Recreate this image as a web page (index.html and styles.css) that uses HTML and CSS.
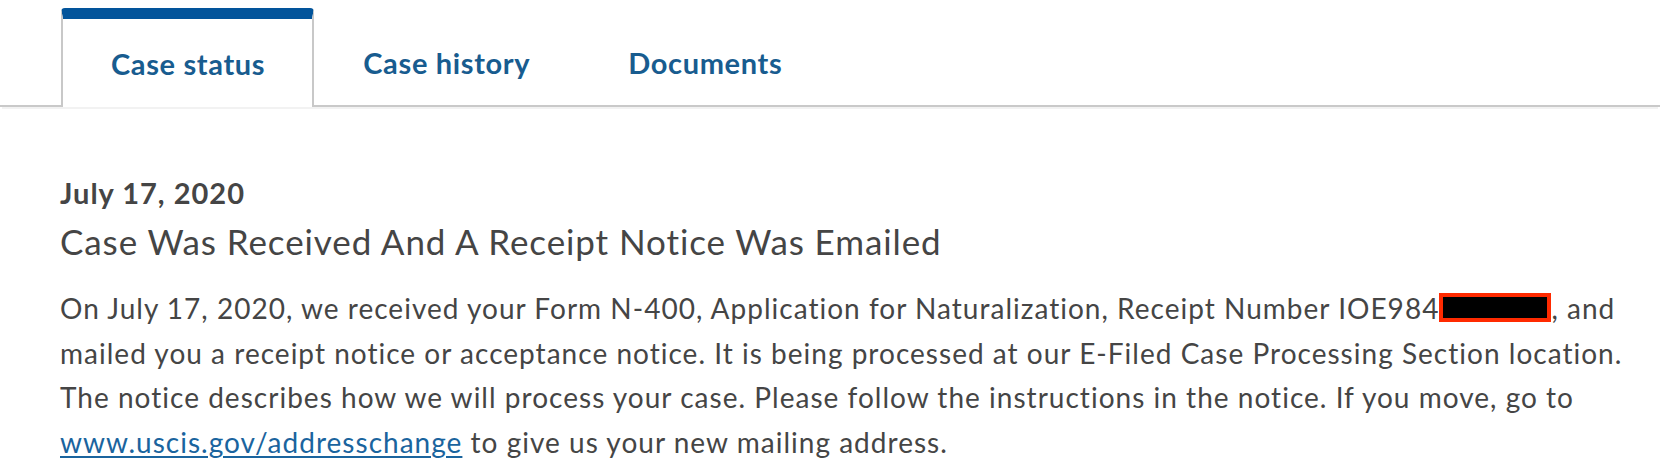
FILE: index.html
```html
<!DOCTYPE html>
<html lang="en">
<head>
<meta charset="utf-8">
<title>Case status</title>
<link rel="stylesheet" href="styles.css">
</head>
<body>
<div class="tabs">
  <ul class="tablist">
    <li class="tab active"><a href="#">Case status</a></li>
    <li class="tab"><a href="#">Case history</a></li>
    <li class="tab"><a href="#">Documents</a></li>
  </ul>
</div>
<main class="content">
  <p class="date">July 17, 2020</p>
  <h2 class="title">Case Was Received And A Receipt Notice Was Emailed</h2>
  <p class="body">On July 17, 2020, we received your Form N-400, Application for Naturalization, Receipt Number IOE984<span class="redact"></span>, and mailed you a receipt notice or acceptance notice. It is being processed at our E-Filed Case Processing Section location. The notice describes how we will process your case. Please follow the instructions in the notice. If you move, go to <a href="#">www.uscis.gov/addresschange</a> to give us your new mailing address.</p>
</main>
</body>
</html>
```
FILE: styles.css
```css
html, body { margin: 0; padding: 0; background: #fff; }
body { font-family: Lato, "Noto Sans", sans-serif; color: #454545; }

.tabs { padding-top: 8px; border-bottom: 2px solid #c9c9c9; box-shadow: 0 4px 0 -2px #f2f2f2; }
.tablist { list-style: none; margin: 0; padding: 0 0 0 61px; display: flex; }
.tab { display: flex; align-items: center; height: 86px; margin-top: 11px; padding: 0 49px; }
.tab a { color: #185c8f; text-decoration: none; font-weight: 700; font-size: 29px; letter-spacing: 0.65px; }
.tab.active { margin-top: 0; border-top: 11px solid #02549b; border-left: 2px solid #c8c8c8; border-right: 2px solid #c8c8c8; border-radius: 4px 4px 0 0; margin-bottom: -2px; background: #fff; height: 88px; padding: 0 47px 0 48px; }

.content { padding: 70px 20px 0 60px; }
.date { margin: 0; font-weight: 700; font-size: 29px; line-height: 32px; letter-spacing: 1px; color: #454545; }
.title { margin: 10px 0 0; font-weight: 400; font-size: 35px; line-height: 44px; letter-spacing: 0.9px; color: #454545; }
.body { margin: 23px 0 0; font-size: 28px; line-height: 44.6px; letter-spacing: 1.02px; }
.body a { color: #1a649e; text-decoration-thickness: 2px; text-underline-offset: 3px; }
.redact { display: inline-block; width: 104px; height: 21px; background: #000; border: 4px solid #ff2a00; vertical-align: -3px; letter-spacing: 0; }
```
